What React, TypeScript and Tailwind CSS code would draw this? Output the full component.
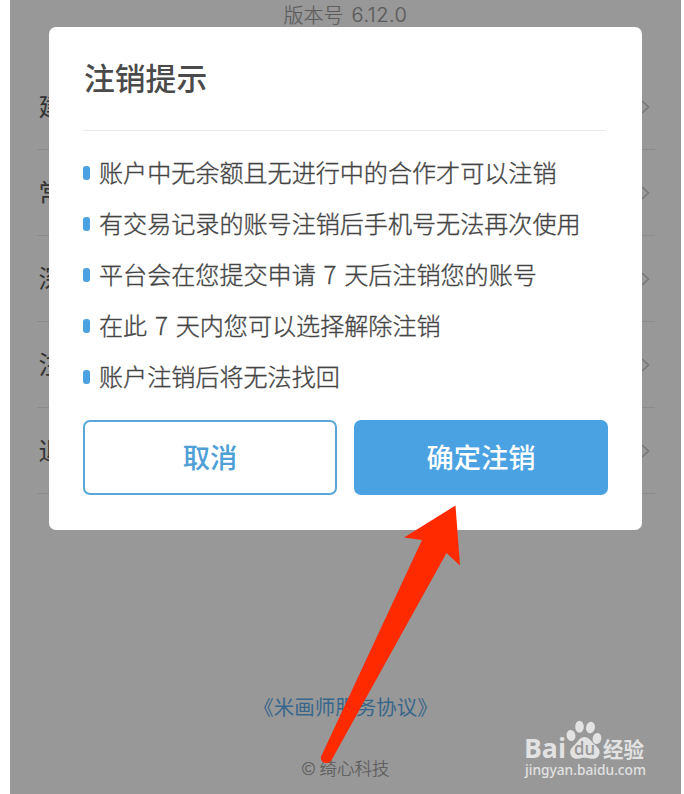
const tips = [
  "账户中无余额且无进行中的合作才可以注销",
  "有交易记录的账号注销后手机号无法再次使用",
  "平台会在您提交申请 7 天后注销您的账号",
  "在此 7 天内您可以选择解除注销",
  "账户注销后将无法找回",
];

const menu = ["建", "常", "深", "注", "退"];

function SettingsPage() {
  return (
    <div className="flex h-full flex-col items-center">
      <p className="flex h-[64px] gap-[8px] pt-px text-[20px] leading-[28px] font-light text-[#5c5c5c] [-webkit-text-stroke:0.2px_#5c5c5c]">
        <span>版本号</span>
        <span className="font-['Inter',sans-serif] text-[20px] tracking-[0.5px]">6.12.0</span>
      </p>
      <ul className="w-[618px]">
        {menu.map((item) => (
          <li
            key={item}
            className="flex h-[86px] items-center justify-between border-b border-[#8b8b8b] pr-[5px] pl-[2px] text-[25px] text-[#333]"
          >
            <span className="pb-px">{item}</span>
            <svg width="10" height="16" viewBox="0 0 10 16" fill="none" stroke="#777" strokeWidth="1.5">
              <path d="M2 2l6.5 6L2 14" />
            </svg>
          </li>
        ))}
      </ul>
      <div className="mt-auto flex flex-col items-center pb-[11px]">
        <p className="text-[20.5px] leading-[32px] text-[#39678b]">《米画师服务协议》</p>
        <p className="mt-[31px] text-[17.5px] leading-[30px] font-light text-[#5a5a5a] [-webkit-text-stroke:0.2px_#5a5a5a]">
          © 绮心科技
        </p>
      </div>
    </div>
  );
}

function CancelDialog() {
  return (
    <div className="absolute top-[27px] left-[39px] flex h-[503px] w-[593px] flex-col rounded-[7px] bg-white px-[34px]">
      <h2 className="h-[103px] pt-[27px] pl-px text-[30.8px] leading-[46px] font-medium text-[#4a4a4a]">注销提示</h2>
      <div className="mr-[2px] border-t border-[#ebebeb]" />
      <ul className="pt-[17px]">
        {tips.map((tip) => (
          <li
            key={tip}
            className="flex h-[51px] items-center gap-[9px] text-[24.08px] font-light text-[#444] [-webkit-text-stroke:0.35px_#444]"
          >
            <span className="mb-[2px] h-[14px] w-[7px] rounded-[3px] bg-[#4aa2e2]" />
            <span className="pb-[2px] [word-spacing:2.5px] whitespace-nowrap">{tip}</span>
          </li>
        ))}
      </ul>
      <div className="mt-[17px] flex gap-[17px]">
        <button className="h-[75px] w-[254px] shrink-0 rounded-[7px] border-2 border-[#5aa6d6] pb-[3px] text-[27.3px] font-medium text-[#4d9fd6]">
          取消
        </button>
        <button className="h-[75px] w-[254px] shrink-0 rounded-[7px] bg-[#4aa2e2] pb-[3px] text-[27.3px] font-medium text-white">
          确定注销
        </button>
      </div>
    </div>
  );
}

function Watermark() {
  return (
    <svg
      className="absolute top-[718px] left-[512px]"
      width="130"
      height="64"
      viewBox="0 0 130 64"
      fill="#e2e2e2"
    >
      <text x="2" y="39.5" fontSize="26" fontWeight="700" textLength="42" lengthAdjust="spacingAndGlyphs" fontFamily="Open Sans, sans-serif">
        Bai
      </text>
      <ellipse cx="49" cy="17.5" rx="4.4" ry="5.5" transform="rotate(-12 49 17.5)" />
      <ellipse cx="57.5" cy="8.8" rx="4.3" ry="6" />
      <ellipse cx="68.5" cy="9.6" rx="4.4" ry="5.8" transform="rotate(14 68.5 9.6)" />
      <ellipse cx="75" cy="20.5" rx="4.3" ry="5.5" transform="rotate(12 75 20.5)" />
      <path d="M62.5 19c4.500 0 6.500 4 9.500 7s6.500 5 5.500 9.500c-1 4-4 5.500-7.500 5.200-2.500-.2-4.500-.9-7.500-.9s-4.500.7-7 .9c-4 .3-7-2-7.300-6-.3-4.200 3-6.200 5.300-8.700 3-3.200 4.500-7 9-7z" />
      <text x="52" y="37" fontSize="17.5" fontWeight="600" textLength="21" lengthAdjust="spacingAndGlyphs" fontFamily="Open Sans, sans-serif" fill="#989898">
        du
      </text>
      <text x="81" y="38.5" fontSize="21" fontWeight="700" textLength="41" lengthAdjust="spacingAndGlyphs" fontFamily="Noto Sans CJK SC, sans-serif">
        经验
      </text>
      <text x="3" y="56.5" fontSize="13.5" fontWeight="500" textLength="121" lengthAdjust="spacingAndGlyphs" fontFamily="Noto Sans, sans-serif">
        jingyan.baidu.com
      </text>
    </svg>
  );
}

export default function App() {
  return (
    <div className="h-[794px] w-[684px] overflow-hidden bg-white font-['Noto_Sans_CJK_SC',sans-serif]">
      <div className="relative ml-[10px] h-full w-[671px] bg-[#989898]">
        <SettingsPage />
        <CancelDialog />
        <Watermark />
        {/* pointer to the confirm button */}
        <svg className="absolute top-[500px] left-[300px]" width="160" height="270" viewBox="0 0 160 270" fill="#ff2a00">
          <path d="M145.500 5.500L94 37.500l18 2.500L11.300 256c-2.500 6 6.500 10 10 4.500L136.500 53 150 65.500z" />
        </svg>
      </div>
    </div>
  );
}
